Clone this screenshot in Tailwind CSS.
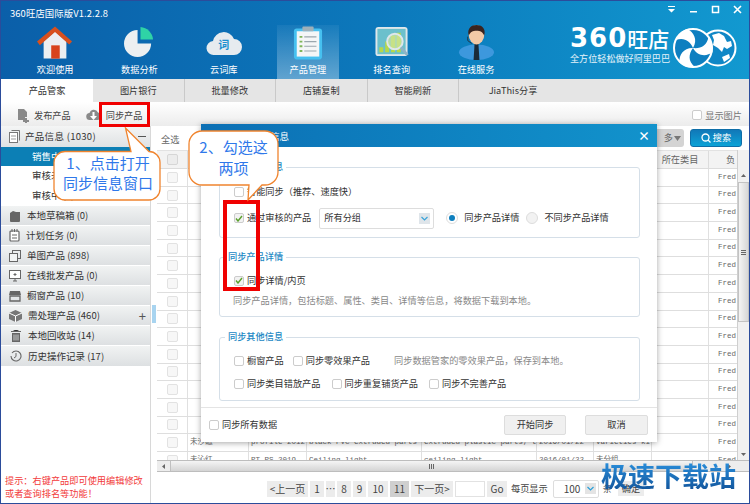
<!DOCTYPE html>
<html lang="zh-CN">
<head>
  <meta charset="UTF-8">
  <title>360旺店国际版</title>
  <script src="https://cdn.jsdelivr.net/npm/@tailwindcss/browser@4"></script>
</head>
<body class="bg-white">
<div class="relative w-[750px] h-[504px] overflow-hidden flex flex-col border border-[#2b4c9b] font-['Noto_Sans_CJK_SC',sans-serif] text-[9.2px] text-[#333]">

  <!-- header -->
  <header class="h-[78px] shrink-0 relative bg-gradient-to-r from-[#0b5fa9] via-[#0c78bb] to-[#1299d0] text-white">
    <div class="absolute left-[9px] top-[5px] text-[9.4px] tracking-[0.1px]">360旺店国际版V1.2.2.8</div>
    <div class="absolute right-[6px] top-[3px] flex items-center gap-[11px]">
      <svg class="w-[11px] h-[11px]" viewBox="0 0 11 11"><path d="M2 2h7v1H2zM2 5h7L5.500 8.500z" fill="#fff"/></svg>
      <svg class="w-[11px] h-[11px]" viewBox="0 0 11 11"><path d="M2 7h7v1.500H2z" fill="#fff"/></svg>
      <svg class="w-[11px] h-[11px]" viewBox="0 0 11 11"><rect x="2.500" y="2.500" width="6" height="6" fill="none" stroke="#fff" stroke-width="1.500"/></svg>
      <svg class="w-[11px] h-[11px]" viewBox="0 0 11 11"><path d="M2 2l7 7M9 2l-7 7" stroke="#fff" stroke-width="1.600"/></svg>
    </div>

    <nav class="absolute left-[12px] top-[24px] bottom-0 flex">
      <div class="w-[84.300px] flex flex-col items-center justify-end pb-[2px] gap-[3px]">
        <svg class="w-[36px] h-[35px]" viewBox="0 0 38 36">
          <path d="M7 17L19 6l12 11v18H7z" fill="#eceff1"/>
          <path d="M0 17L19 1l18 16-3 3L19 7 3 21z" fill="#d8501e"/>
          <rect x="15" y="21" width="9" height="14" fill="#d8431c"/>
        </svg>
        <span>欢迎使用</span>
      </div>
      <div class="w-[84.300px] flex flex-col items-center justify-end pb-[2px] gap-[3px]">
        <svg class="w-[31px] h-[35px]" viewBox="0 0 32 36">
          <path d="M14 5a14 14 0 1 0 14 14H14z" fill="#eceff1"/>
          <path d="M17 2a14 14 0 0 1 13 13H17z" fill="#2fd3a6"/>
        </svg>
        <span>数据分析</span>
      </div>
      <div class="w-[84.300px] flex flex-col items-center justify-end pb-[2px] gap-[3px]">
        <div class="relative w-[36px] h-[35px] flex items-center justify-center">
          <svg class="absolute inset-0" viewBox="0 0 36 36">
            <path d="M8 30a7 7 0 0 1-1-14 11 11 0 0 1 21-2 8 8 0 0 1 0 16z" fill="#e6ebef"/>
          </svg>
          <span class="relative text-[11px] font-bold text-[#1a8fd0] mt-[4px]">词</span>
        </div>
        <span>云词库</span>
      </div>
      <div class="w-[62px] mx-[11px] bg-gradient-to-b from-white/5 to-white/35 flex flex-col items-center justify-end pb-[2px] gap-[3px]">
        <svg class="w-[30px] h-[35px]" viewBox="0 0 32 36">
          <rect x="1" y="3" width="30" height="33" rx="3" fill="#46c0f0"/>
          <rect x="4" y="6" width="24" height="27" fill="#f4f6f7"/>
          <rect x="10" y="1" width="12" height="5" rx="1" fill="#9fb0b9"/>
          <path d="M7 12h3M7 17h3M7 22h3M7 27h3" stroke="#7fb65a" stroke-width="2"/>
          <path d="M12 12h13M12 17h13M12 22h13M12 27h13" stroke="#9aa7ae" stroke-width="1.200"/>
        </svg>
        <span>产品管理</span>
      </div>
      <div class="w-[84.300px] -ml-[0.300px] flex flex-col items-center justify-end pb-[2px] gap-[3px]">
        <svg class="w-[36px] h-[35px]" viewBox="0 0 36 36">
          <rect x="1" y="2" width="33" height="30" rx="3" fill="#dfe7ea"/>
          <rect x="3" y="4" width="29" height="26" fill="#6cc0cc"/>
          <path d="M5 28v-5h4v5zM11 28V17h4v11zM17 28V11h4v17zM23 28V8h4v20z" fill="#b6d84a"/>
          <circle cx="21" cy="17" r="8" fill="#cfe5a0" fill-opacity=".7" stroke="#dfe7ea" stroke-width="2"/>
          <path d="M27 23l7 8" stroke="#8fb4c6" stroke-width="3"/>
        </svg>
        <span>排名查询</span>
      </div>
      <div class="w-[84.300px] flex flex-col items-center justify-end pb-[2px] gap-[3px]">
        <svg class="w-[37px] h-[35px]" viewBox="0 0 38 36">
          <ellipse cx="19" cy="28" rx="18" ry="8" fill="#3d98dd"/>
          <path d="M17 19h4l1 17h-6z" fill="#1b2a38"/>
          <ellipse cx="19" cy="10" rx="8" ry="10" fill="#f3c9a7"/>
          <path d="M11 11C9 3 14 0 19 0s10 3 8 11c-2-4-4-5-8-5s-6 1-8 5z" fill="#3a2420"/>
          <path d="M10 12v4l4 3" stroke="#23323f" fill="none"/>
        </svg>
        <span>在线服务</span>
      </div>
    </nav>

    <div class="absolute left-[569px] top-[25px] w-[102px]">
      <div class="flex items-center h-[24px] leading-none">
        <span class="font-['DejaVu_Sans',sans-serif] font-bold text-[26px] tracking-[1px] leading-none">360</span>
        <span class="text-[21px] font-medium leading-none">旺店</span>
      </div>
      <div class="mt-[1px] text-[9.100px] leading-[14px] whitespace-nowrap text-white/90">全方位轻松做好阿里巴巴</div>
    </div>
    <svg class="absolute left-[672px] top-[25px] w-[65px] h-[44px]" viewBox="0 0 65 44">
      <circle cx="45" cy="22" r="17.500" fill="#1087c6" stroke="#fff" stroke-width="2"/>
      <path d="M39 9l7-2 5 3 3 6 4-1 1 5-5 3-3-2-2 5-4-4-5-3 1-5zM49 31l7-3 1 4-6 4z" fill="#fff"/>
      <circle cx="20" cy="22" r="19" fill="#0e7fc0" stroke="#fff" stroke-width="2"/>
      <g fill="#fff">
        <path d="M20 22C17 15 11 11 3 14 5 8 9 5 14 3 21 6 25 14 20 22z"/>
        <path d="M20 22C17 15 11 11 3 14 5 8 9 5 14 3 21 6 25 14 20 22z" transform="rotate(120 20 22)"/>
        <path d="M20 22C17 15 11 11 3 14 5 8 9 5 14 3 21 6 25 14 20 22z" transform="rotate(240 20 22)"/>
      </g>
    </svg>
  </header>

  <!-- tabs -->
  <div class="h-[23px] shrink-0 flex items-center bg-[#e5e5e5] text-[#333]">
    <div class="w-[92px] h-full bg-white flex items-center justify-center pt-[1px]">产品管家</div>
    <div class="w-[91.500px] h-full flex items-center justify-center pt-[1px] border-r border-[#c9c9c9]">图片银行</div>
    <div class="w-[91.500px] h-full flex items-center justify-center pt-[1px] border-r border-[#c9c9c9]">批量修改</div>
    <div class="w-[91.500px] h-full flex items-center justify-center pt-[1px] border-r border-[#c9c9c9]">店铺复制</div>
    <div class="w-[91.500px] h-full flex items-center justify-center pt-[1px] border-r border-[#c9c9c9]">智能刷新</div>
    <div class="w-[108px] h-full flex items-center justify-center pt-[1px]">JiaThis分享</div>
  </div>

  <!-- toolbar -->
  <div class="h-[24px] shrink-0 flex items-center pt-[3px] bg-gradient-to-b from-white to-[#ececec] text-[#444]">
    <svg class="ml-[16px] w-[12px] h-[14px]" viewBox="0 0 12 14"><path d="M1 0h6l3 3v5H8v3H1z" fill="#8a8a8a"/><path d="M8 9h2v2h2v2h-2v1H8v-1H6v-2h2z" fill="#8a8a8a"/></svg>
    <span class="ml-[5px]">发布产品</span>
    <svg class="ml-[15px] w-[15px] h-[13px]" viewBox="0 0 15 13"><path d="M4 11a3.500 3.500 0 0 1-.500-7 4.500 4.500 0 0 1 8.500-.500A3.800 3.800 0 0 1 12 11z" fill="#8a8a8a"/><path d="M6.500 3h2v4H11l-3.500 4L4 7h2.500z" fill="#fff"/></svg>
    <span class="ml-[5px]">同步产品</span>
    <label class="ml-auto mr-[7px] flex items-center gap-[3px] text-[#777]">
      <span class="w-[10px] h-[10px] rounded-[2px] border border-[#ccc] bg-white"></span>显示图片
    </label>
  </div>

  <!-- body -->
  <div class="flex-1 min-h-0 flex">
    <!-- sidebar -->
    <aside class="w-[150px] shrink-0 flex flex-col border-r border-[#d8d8d8] text-[#333] text-[9.500px]">
      <div class="h-[21px] flex items-center pl-[8px] pr-[4px] tracking-[0.3px] bg-gradient-to-b from-[#f4f5f5] to-[#dfe2e4]">
        <svg class="w-[11px] h-[13px] mr-[5px]" viewBox="0 0 11 13"><path d="M2.500 .500h8v10" fill="none" stroke="#777"/><rect x=".500" y="2.500" width="8" height="10" fill="#fff" stroke="#777"/><path d="M2 6h5M2 9h5" stroke="#999"/></svg>
        产品信息 (1030)
        <span class="ml-auto w-[8px] h-[1px] bg-[#555]"></span>
      </div>
      <div class="h-[19px] flex items-center pl-[31px] bg-[#0c7fb5] text-white">销售中</div>
      <div class="h-[18px] flex items-center pl-[31px]">审核未通过</div>
      <div class="h-[22px] flex items-center pl-[31px]">审核中 (0)</div>

      <div class="h-[20px] flex items-center pl-[8px] border-b border-white bg-gradient-to-b from-[#f1f3f3] to-[#dde0e2]">
        <svg class="w-[12px] h-[12px] mr-[6px]" viewBox="0 0 12 12"><path d="M1 3l3-2 3 1h4v9a1 1 0 0 1-1 1H2a1 1 0 0 1-1-1z" fill="#666"/></svg>本地草稿箱 (0)
      </div>
      <div class="h-[20px] flex items-center pl-[8px] border-b border-white bg-gradient-to-b from-[#f1f3f3] to-[#dde0e2]">
        <svg class="w-[11px] h-[13px] mr-[6px]" viewBox="0 0 11 13"><rect x="1" y="2" width="9" height="10" rx="1" fill="#fff" stroke="#666" stroke-width="1.200"/><path d="M3 0v3M5.500 0v3M8 0v3M3 6h5M3 9h5" stroke="#666"/></svg>计划任务 (0)
      </div>
      <div class="h-[20px] flex items-center pl-[8px] border-b border-white bg-gradient-to-b from-[#f1f3f3] to-[#dde0e2]">
        <svg class="w-[12px] h-[12px] mr-[6px]" viewBox="0 0 12 12"><rect x="3.500" y=".500" width="8" height="8" fill="none" stroke="#666"/><rect x=".500" y="3.500" width="8" height="8" fill="#f1f3f3" stroke="#666"/></svg>单图产品 (898)
      </div>
      <div class="h-[20px] flex items-center pl-[8px] border-b border-white bg-gradient-to-b from-[#f1f3f3] to-[#dde0e2]">
        <svg class="w-[12px] h-[12px] mr-[6px]" viewBox="0 0 12 12"><rect x=".500" y=".500" width="11" height="8" fill="#fff" stroke="#666"/><path d="M4 11h4M6 8.500V11M6 3v3M4.500 4.500h3" stroke="#666"/></svg>在线批发产品 (0)
      </div>
      <div class="h-[20px] flex items-center pl-[8px] border-b border-white bg-gradient-to-b from-[#f1f3f3] to-[#dde0e2]">
        <svg class="w-[12px] h-[12px] mr-[6px]" viewBox="0 0 12 12"><path d="M1 1h10l1 4H0z" fill="#666"/><path d="M1 6h10v5H1z" fill="none" stroke="#666" stroke-width="1.300"/></svg>橱窗产品 (10)
      </div>
      <div class="h-[20px] flex items-center pl-[8px] pr-[4px] border-b border-white bg-gradient-to-b from-[#f1f3f3] to-[#dde0e2]">
        <svg class="w-[13px] h-[12px] mr-[6px]" viewBox="0 0 13 12"><path d="M6.500 0L13 3v6l-6.500 3L0 9V3z" fill="#777"/><path d="M0 3l6.500 3L13 3M6.500 6v6" stroke="#fff" fill="none"/></svg>需处理产品 (460)
        <span class="ml-auto text-[13px] leading-none text-[#555]">+</span>
      </div>
      <div class="h-[20px] flex items-center pl-[10px] border-b border-white bg-gradient-to-b from-[#f1f3f3] to-[#dde0e2]">
        <svg class="w-[10px] h-[12px] mr-[7px]" viewBox="0 0 10 12"><path d="M0 1.500h10M3 1V0h4v1" stroke="#666"/><path d="M1 3h8v9H1z" fill="#666"/><path d="M3 4.500v6M5 4.500v6M7 4.500v6" stroke="#e6e8e9" stroke-width=".8"/></svg>本地回收站 (14)
      </div>
      <div class="h-[20px] flex items-center pl-[9px] bg-gradient-to-b from-[#f1f3f3] to-[#dde0e2]">
        <svg class="w-[12px] h-[12px] mr-[6px]" viewBox="0 0 12 12"><path d="M2 3a5 5 0 1 1-1 3" fill="none" stroke="#666" stroke-width="1.100"/><path d="M6 3v3.500L4 8" fill="none" stroke="#666"/></svg>历史操作记录 (17)
      </div>
      <div class="mt-auto mb-[3px] pl-[4px] text-[#f23b3b] text-[9.200px] leading-[13px]">
        提示：右键产品即可使用编辑修改<br>或者查询排名等功能！
      </div>
    </aside>

    <!-- splitter -->
    <div class="w-[6px] shrink-0 flex flex-col justify-start">
      <div class="mt-[179px] ml-[1px] w-[4px] h-[18px] bg-[#a8d4f0]"></div>
    </div>

    <!-- main -->
    <main class="flex-1 min-w-0 flex flex-col">
      <div class="h-[24px] shrink-0 flex items-center pl-[4px] pr-[7px] text-[#666]">
        <span class="pt-[4px]">全选</span>
        <span class="ml-auto mr-[6px] w-[30px] h-[18px] rounded-[3px] bg-[#d4d4d4] flex items-center justify-end gap-[1px] pr-[3px] text-[#666]">多<svg class="w-[7px] h-[5px]" viewBox="0 0 7 5"><path d="M0 0h7L3.500 5z" fill="#777"/></svg></span>
        <button class="w-[52px] h-[18px] rounded-[3px] bg-gradient-to-b from-[#1178b8] to-[#0ba2d6] text-white flex items-center justify-center gap-[2px] border border-[#0e6ea8]">
          <svg class="w-[10px] h-[10px]" viewBox="0 0 10 10"><circle cx="4.500" cy="4.500" r="3.500" fill="none" stroke="#fff" stroke-width="1.300"/><path d="M7 7l2.500 2.500" stroke="#fff" stroke-width="1.300"/></svg>
          搜索
        </button>
      </div>
      <div class="flex-1 min-h-0 flex">
        <div id="grid" class="flex-1 min-w-0 overflow-hidden border-t border-[#e2e2e2]">
          <div class="h-[18px] flex bg-[#f3f3f3] border-b border-[#dcdcdc] text-[#666]">
            <div class="w-[31px] shrink-0 border-r border-[#dcdcdc] flex items-center justify-center"><span class="w-[11px] h-[11px] rounded-[2px] border border-[#d6d6d6] bg-[#ececec]"></span></div>
            <div class="w-[464px] shrink-0"></div>
            <div class="w-[57px] shrink-0 border-r border-[#dcdcdc] flex items-center justify-center">所在类目</div>
            <div class="pl-[17px] flex items-center">负</div>
          </div>
        </div>
        <div class="w-[12px] shrink-0 flex flex-col bg-[#f1f1f1] border-l border-[#cfcfcf] pt-[18px]">
          <div class="h-[14px] flex items-center justify-center"><svg class="w-[5px] h-[3px]" viewBox="0 0 5 3"><path d="M0 3h5L2.500 0z" fill="#666"/></svg></div>
          <div class="h-[140px] bg-gradient-to-r from-[#f4f4f4] to-[#d7d7d7] border border-[#c3c3c3] flex items-center justify-center"><span class="w-[5px] h-[5px] border-y border-[#666] bg-[linear-gradient(#666,#666)] bg-[length:100%_1px] bg-center bg-no-repeat"></span></div>
          <div class="mt-auto h-[12px] flex items-center justify-center"><svg class="w-[5px] h-[3px]" viewBox="0 0 5 3"><path d="M0 0h5L2.500 3z" fill="#666"/></svg></div>
        </div>
      </div>
      <div class="h-[12px] shrink-0 flex items-stretch bg-[#ededed] border-y border-[#bdbdbd]">
        <div class="w-[13px] flex items-center justify-center"><svg class="w-[3px] h-[5px]" viewBox="0 0 3 5"><path d="M3 0v5L0 2.500z" fill="#666"/></svg></div>
        <div class="w-[523px] bg-gradient-to-b from-[#f5f5f5] to-[#d4d4d4] border-x border-[#c0c0c0] flex items-center justify-center"><span class="w-[5px] h-[5px] border-x border-[#666] bg-[linear-gradient(#666,#666)] bg-[length:1px_100%] bg-center bg-no-repeat"></span></div>
        <div class="flex-1 flex items-center justify-end pr-[18px]"><svg class="w-[3px] h-[5px]" viewBox="0 0 3 5"><path d="M0 0v5l3-2.500z" fill="#666"/></svg></div>
      </div>
      <!-- pagination -->
      <div class="h-[31px] shrink-0 flex items-center gap-[2px] pl-[110px] pt-[2px] text-[#444] text-[10px]">
        <span class="w-[41px] h-[16px] bg-[#ececec] flex items-center justify-center">&lt;上一页</span>
        <span class="w-[14px] h-[16px] bg-[#ececec] flex items-center justify-center">1</span>
        <span class="w-[9px] h-[16px] bg-[#ececec] flex items-center justify-center">…</span>
        <span class="w-[14px] h-[16px] bg-[#ececec] flex items-center justify-center">8</span>
        <span class="w-[13px] h-[16px] bg-[#ececec] flex items-center justify-center">9</span>
        <span class="w-[20px] h-[16px] bg-[#ececec] flex items-center justify-center">10</span>
        <span class="w-[19px] h-[16px] bg-[#cfcfcf] flex items-center justify-center">11</span>
        <span class="w-[42px] h-[16px] bg-[#ececec] flex items-center justify-center">下一页&gt;</span>
        <span class="w-[30px] h-[16px] bg-white border border-[#e2e2e2]"></span>
        <span class="w-[20px] h-[16px] bg-[#ececec] flex items-center justify-center">Go</span>
        <span class="ml-[2px] text-[9.200px]">每页显示</span>
        <span class="ml-[3px] w-[46px] h-[18px] border border-[#ddd] rounded-[2px] flex items-center justify-between pl-[10px] pr-[2px]">100
          <span class="w-[11px] h-[11px] bg-[#e4e4e4] flex items-center justify-center"><svg class="w-[7px] h-[5px]" viewBox="0 0 7 5"><path d="M.5 1l3 3 3-3" fill="none" stroke="#2a9fd8" stroke-width="1.200"/></svg></span>
        </span>
        <span class="ml-[2px] text-[9.200px]">条</span>
        <span class="ml-[4px] w-[26px] h-[15px] bg-[#ececec] flex items-center justify-center text-[9.200px]">确定</span>
      </div>
    </main>
  </div>

  <!-- dialog -->
  <div class="absolute left-[200px] top-[123px] w-[456px] h-[318px] bg-white shadow-[0_1px_6px_rgba(0,0,0,0.35)] flex flex-col">
    <div class="h-[23px] shrink-0 bg-gradient-to-r from-[#0c6fb4] to-[#1293cc] text-white flex items-center pl-[50px] pr-[7px] pt-[2px] text-[9.500px]">
      同步信息<span class="ml-auto -mt-[2px] text-[12px] font-bold leading-none">×</span>
    </div>
    <div class="flex-1 px-[18px] pr-[17px] flex flex-col">
      <fieldset class="mt-[20px] h-[71px] border border-[#d5dfe8] rounded-[3px] relative pl-[14px]">
        <span class="absolute left-[5px] -top-[8px] bg-white px-[3px] text-[#1b88c4] font-medium">同步产品信息</span>
        <div class="mt-[17px] flex items-center gap-[3px]"><span class="w-[10px] h-[10px] rounded-[2px] border border-[#ccc]"></span>智能同步（推荐、速度快）</div>
        <div class="mt-[9px] flex items-center">
          <span class="w-[10px] h-[10px] rounded-[2px] border border-[#ccc] bg-[#f2f2f2] flex items-center justify-center"><svg class="w-[8px] h-[7px]" viewBox="0 0 8 7"><path d="M1 3.500l2 2.500 4-5" fill="none" stroke="#5aa02c" stroke-width="1.400"/></svg></span>
          <span class="ml-[3px]">通过审核的产品</span>
          <span class="ml-[8px] w-[115px] h-[21px] border border-[#ddd] rounded-[2px] flex items-center justify-between pl-[4px] pr-[3px]">所有分组
            <span class="w-[11px] h-[11px] bg-[#dfe5ea] flex items-center justify-center"><svg class="w-[7px] h-[5px]" viewBox="0 0 7 5"><path d="M.5 1l3 3 3-3" fill="none" stroke="#3aa3d8" stroke-width="1.200"/></svg></span>
          </span>
          <span class="ml-[12px] w-[12px] h-[12px] rounded-full border border-[#ddd] flex items-center justify-center"><span class="w-[6px] h-[6px] rounded-full bg-[#0e7fbe]"></span></span>
          <span class="ml-[6px]">同步产品详情</span>
          <span class="ml-[7px] w-[12px] h-[12px] rounded-full border border-[#ddd] bg-[#f2f2f2]"></span>
          <span class="ml-[6px]">不同步产品详情</span>
        </div>
      </fieldset>
      <fieldset class="mt-[19px] h-[60px] border border-[#d5dfe8] rounded-[3px] relative pl-[14px]">
        <span class="absolute left-[5px] -top-[8px] bg-white px-[3px] text-[#1b88c4] font-medium">同步产品详情</span>
        <div class="mt-[16px] flex items-center gap-[3px]">
          <span class="w-[10px] h-[10px] rounded-[2px] border border-[#ccc] bg-[#f2f2f2] flex items-center justify-center"><svg class="w-[8px] h-[7px]" viewBox="0 0 8 7"><path d="M1 3.500l2 2.500 4-5" fill="none" stroke="#5aa02c" stroke-width="1.400"/></svg></span>同步详情/内页
        </div>
        <div class="mt-[6px] -ml-[1px] text-[#888]">同步产品详情，包括标题、属性、类目、详情等信息，将数据下载到本地。</div>
      </fieldset>
      <fieldset class="mt-[20px] h-[64px] border border-[#d5dfe8] rounded-[3px] relative pl-[14px]">
        <span class="absolute left-[5px] -top-[8px] bg-white px-[3px] text-[#1b88c4] font-medium">同步其他信息</span>
        <div class="mt-[16px] flex items-center">
          <span class="w-[10px] h-[10px] rounded-[2px] border border-[#ccc]"></span><span class="ml-[3px]">橱窗产品</span>
          <span class="ml-[9px] w-[10px] h-[10px] rounded-[2px] border border-[#ccc]"></span><span class="ml-[3px]">同步零效果产品</span>
          <span class="ml-[24px] text-[#888]">同步数据管家的零效果产品，保存到本地。</span>
        </div>
        <div class="mt-[9px] flex items-center">
          <span class="w-[10px] h-[10px] rounded-[2px] border border-[#ccc]"></span><span class="ml-[3px]">同步类目错放产品</span>
          <span class="ml-[11px] w-[10px] h-[10px] rounded-[2px] border border-[#ccc]"></span><span class="ml-[3px]">同步重复铺货产品</span>
          <span class="ml-[11px] w-[10px] h-[10px] rounded-[2px] border border-[#ccc]"></span><span class="ml-[3px]">同步不完善产品</span>
        </div>
      </fieldset>
    </div>
    <div class="h-[35px] shrink-0 border-t border-[#e4e4e4] flex items-center pl-[8px] pr-[9px]">
      <span class="w-[10px] h-[10px] rounded-[2px] border border-[#ccc]"></span>
      <span class="ml-[3px]">同步所有数据</span>
      <button class="ml-auto w-[62px] h-[20px] rounded-[2px] bg-[#f0f0f0] border border-[#ddd]">开始同步</button>
      <button class="ml-[19px] w-[63px] h-[20px] rounded-[2px] bg-[#f0f0f0] border border-[#ddd]">取消</button>
    </div>
  </div>

  <!-- red annotation boxes -->
  <div class="absolute left-[98px] top-[101px] w-[51px] h-[25px] border-[3px] border-[#f00000]"></div>
  <div class="absolute left-[222px] top-[199px] w-[37px] h-[91px] border-[4px] border-[#f00000]"></div>

  <!-- callouts -->
  <div class="absolute left-[52px] top-[126px] w-[110px] h-[75px]">
    <svg class="absolute inset-0" viewBox="0 0 110 75"><path d="M12 24.500H78L72.500 1 96 24.500H96a11 11 0 0 1 11 11V62a11 11 0 0 1-11 11H12A11 11 0 0 1 1 62V35.500a11 11 0 0 1 11-11z" fill="#fff" stroke="#f0842e" stroke-width="1.300"/></svg>
    <div class="absolute left-0 right-0 top-[26px] text-center text-[15px] leading-[20px] text-[#2f78ea]">1、点击打开<br>同步信息窗口</div>
  </div>
  <div class="absolute left-[187px] top-[129px] w-[94px] h-[72px]">
    <svg class="absolute inset-0" viewBox="0 0 94 72"><path d="M14 1H77a13 13 0 0 1 13 13V42a13 13 0 0 1-13 13H74L60 70 61 55H14A13 13 0 0 1 1 42V14A13 13 0 0 1 14 1z" fill="#fff" stroke="#f0842e" stroke-width="1.300"/></svg>
    <div class="absolute left-0 right-[3px] top-[6px] text-center text-[15px] leading-[21px] text-[#2f78ea]">2、勾选这<br>两项</div>
  </div>

  <!-- watermark -->
  <div class="absolute left-[600px] top-[461px] text-[27px] leading-[27px] font-bold whitespace-nowrap text-transparent bg-clip-text bg-gradient-to-b from-[#2a8fdc] to-[#14589f]">极速下载站</div>
</div>

<script>
  // table rows behind the dialog
  const grid = document.getElementById('grid');
  const lastRows = {
    15: ['未沙磁', 'profile 2012', 'black PVC extruded parts', 'extruded plastic parts, tv', '2016/01/22', 'varieties ki'],
    16: ['未沁红', 'PT-PS-2019', 'Ceiling light', 'ceiling light', '2016/01/22', '未分组'],
  };
  const widths = ['w-[61px]', 'w-[58px]', 'w-[115px]', 'w-[115px]', 'w-[57px]', 'w-[58px]'];
  for (let i = 0; i < 17; i++) {
    const cells = widths.map((w, c) =>
      `<div class="${w} h-full shrink-0 border-r border-[#e0e0e0] px-[2px] overflow-hidden whitespace-nowrap flex items-center">${lastRows[i] ? lastRows[i][c] : ''}</div>`
    ).join('');
    grid.insertAdjacentHTML('beforeend',
      `<div class="h-[17.700px] flex items-center border-b border-[#dedede] font-['Liberation_Mono','Noto_Sans_CJK_SC',monospace] text-[7.500px] text-[#666]">
        <div class="w-[31px] h-full shrink-0 border-r border-[#e0e0e0] flex items-center justify-center"><span class="w-[11px] h-[11px] rounded-[2px] border border-[#e2e2e2] bg-[#f7f7f7]"></span></div>
        ${cells}
        <div class="w-[57px] h-full shrink-0 border-r border-[#e0e0e0]"></div>
        <div class="pl-[9px]">Fred</div>
      </div>`);
  }
</script>
</body>
</html>
